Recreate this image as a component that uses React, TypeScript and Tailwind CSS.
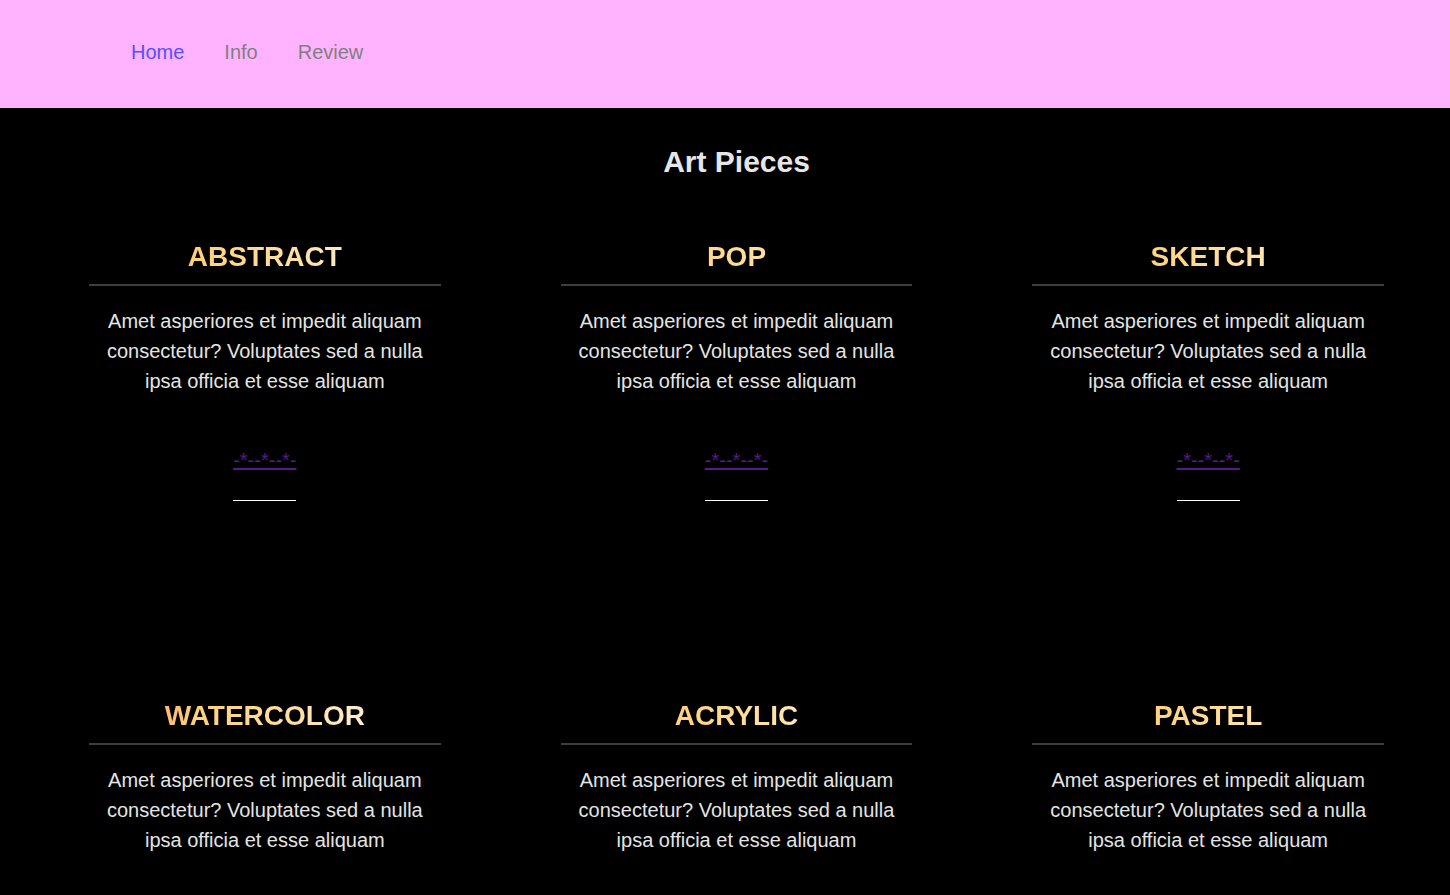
const pieces = ['Abstract', 'Pop', 'Sketch', 'Watercolor', 'Acrylic', 'Pastel'];

const blurb =
  'Amet asperiores et impedit aliquam consectetur? Voluptates sed a nulla ipsa officia et esse aliquam';

function PieceCard({ name }: { name: string }) {
  return (
    <div className="flex flex-col items-center h-[459px]">
      <h2 className="w-full text-center uppercase font-bold text-[28px] leading-[40px] bg-[linear-gradient(to_right,#ff9f7a_0%,#ffb47c_20%,#ffd078_30%,#ffe0a6_60%,#ffeed6_80%)] bg-clip-text text-transparent">
        {name}
      </h2>
      <div className="w-full h-[2px] bg-[#3d3d3d] mt-[7px]" />
      <p className="text-center text-[20px] leading-[30px] text-[#e4e4e4] mt-[20px] px-[16px]">{blurb}</p>
      <div className="mt-[53px] border-b border-white pb-[26px]">
        <a href="#" className="text-[20px] leading-[22px] text-[#551a8b] underline">
          -*--*--*-
        </a>
      </div>
    </div>
  );
}

export default function App() {
  return (
    <div className="min-h-screen bg-black font-['Liberation_Sans',Arial,sans-serif]">
      <nav className="h-[108px] bg-[#ffb3ff] flex items-center pl-[131px] gap-[40px] text-[20px] pb-[5px]">
        <a href="#" className="text-[#5252ff]">Home</a>
        <a href="#" className="text-[#7f7f7f]">Info</a>
        <a href="#" className="text-[#7f7f7f]">Review</a>
      </nav>
      <main className="pl-[89px] pr-[66px]">
        <h1 className="text-center text-[30px] font-bold text-[#e6e6e6] pt-[36px] leading-[36px]">Art Pieces</h1>
        <div className="grid grid-cols-3 gap-x-[120px] mt-[57px]">
          {pieces.map((p) => (
            <PieceCard key={p} name={p} />
          ))}
        </div>
      </main>
    </div>
  );
}
